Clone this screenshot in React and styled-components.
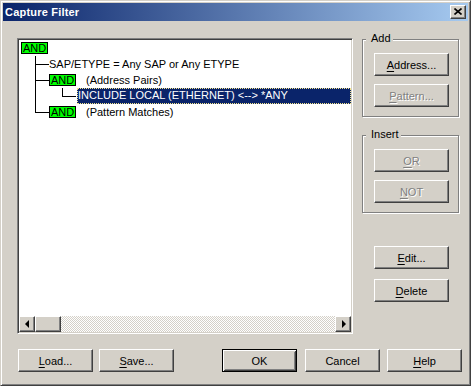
import React from 'react';
import styled, { createGlobalStyle, css } from 'styled-components';

const GlobalStyle = createGlobalStyle`
  html, body {
    margin: 0;
    padding: 0;
    background: #d4d0c8;
  }
  body {
    font-family: 'Liberation Sans', Arial, sans-serif;
    font-size: 11px;
  }
`;

const raised = css`
  border: 1px solid;
  border-color: #fff #404040 #404040 #fff;
  box-shadow: inset -1px -1px #808080, inset 1px 1px #d4d0c8;
`;

const Window = styled.div`
  width: 471px;
  height: 386px;
  box-sizing: border-box;
  background: #d4d0c8;
  border: 1px solid;
  border-color: #d4d0c8 #404040 #404040 #d4d0c8;
  box-shadow: inset 1px 1px #fff, inset -1px -1px #808080;
  padding: 2px;
  display: flex;
  flex-direction: column;
`;

const TitleBar = styled.div`
  height: 18px;
  flex-shrink: 0;
  display: flex;
  align-items: center;
  justify-content: space-between;
  padding: 0 2px;
  background: linear-gradient(to right, #0a246a, #a6caf0);
`;

const Title = styled.span`
  color: #fff;
  font-weight: bold;
  font-size: 11px;
  letter-spacing: 0.2px;
`;

const CloseButton = styled.div`
  ${raised};
  width: 16px;
  height: 14px;
  box-sizing: border-box;
  background: #d4d0c8;
  display: flex;
  align-items: center;
  justify-content: center;
  padding-bottom: 1px;
`;

const Body = styled.div`
  flex: 1;
  display: flex;
  flex-direction: column;
  padding: 17px 0 0 14px;
`;

const Main = styled.div`
  display: flex;
  align-items: flex-start;
`;

const TreePanel = styled.div`
  width: 336px;
  height: 296px;
  box-sizing: border-box;
  border: 1px solid;
  border-color: #808080 #fff #fff #808080;
  box-shadow: inset 1px 1px #404040, inset -1px -1px #d4d0c8;
  padding: 1px;
  background: #fff;
  display: flex;
  flex-direction: column;
`;

const TreeArea = styled.div`
  flex: 1;
  overflow: hidden;
  color: #000;
`;

const Row = styled.div`
  height: 16px;
  display: flex;
  align-items: center;
  padding-left: ${(p) => p.$pad || 0}px;
  white-space: nowrap;
`;

const NodeList = styled.ul`
  list-style: none;
  margin: 0 0 0 ${(p) => p.$indent}px;
  padding: 0;
`;

const NodeItem = styled.li`
  position: relative;
  padding-left: 14px;

  &::before {
    content: '';
    position: absolute;
    left: 0;
    top: 0;
    height: ${(p) => (p.$last ? '8px' : '100%')};
    border-left: 1px solid #000;
  }

  &::after {
    content: '';
    position: absolute;
    left: 0;
    top: 8px;
    width: 14px;
    border-top: 1px solid #000;
  }
`;

const AndTag = styled.span`
  width: 27px;
  height: 12px;
  box-sizing: border-box;
  background: #00ff00;
  border: 1px solid #000;
  display: flex;
  align-items: center;
  justify-content: center;
  line-height: 10px;
  font-size: 11px;
`;

const Label = styled.span`
  margin-left: ${(p) => p.$gap || 0}px;
  line-height: 16px;
  ${(p) =>
    p.$selected &&
    css`
      flex: 1;
      height: 16px;
      box-sizing: border-box;
      margin-left: 1px;
      padding-left: 1px;
      background: #0a246a;
      color: #fff;
      outline: 1px dotted #f5e68c;
      outline-offset: -1px;
      line-height: 15px;
    `}
`;

const HScroll = styled.div`
  height: 16px;
  flex-shrink: 0;
  display: flex;
  background: repeating-conic-gradient(#d4d0c8 0 25%, #fff 0 50%) 0 0 / 2px 2px;
`;

const ScrollButton = styled.div`
  ${raised};
  width: 16px;
  height: 16px;
  box-sizing: border-box;
  background: #d4d0c8;
  display: flex;
  align-items: center;
  justify-content: center;
  ${(p) => p.$end && 'margin-left: auto;'}
`;

const Arrow = styled.span`
  width: 0;
  height: 0;
  border-top: 4px solid transparent;
  border-bottom: 4px solid transparent;
  ${(p) =>
    p.$dir === 'left'
      ? 'border-right: 4px solid #000; margin-right: 1px;'
      : 'border-left: 4px solid #000; margin-left: 1px;'}
`;

const Thumb = styled.div`
  ${raised};
  width: 26px;
  height: 16px;
  box-sizing: border-box;
  background: #d4d0c8;
`;

const SideColumn = styled.div`
  margin-left: 9px;
  padding-top: 1px;
  width: 98px;
  display: flex;
  flex-direction: column;
`;

const GroupBox = styled.div`
  position: relative;
  width: 97px;
  height: 78px;
  box-sizing: border-box;
  border: 1px solid #808080;
  box-shadow: inset 1px 1px #fff, 1px 1px #fff;
  padding: 13px 0 0 11px;
  display: flex;
  flex-direction: column;
  gap: 8px;

  & + & {
    margin-top: 18px;
  }
`;

const Caption = styled.span`
  position: absolute;
  top: -8px;
  left: 3px;
  padding: 0 2px 0 5px;
  background: #d4d0c8;
  line-height: 13px;
  color: #000;
`;

const Button = styled.div`
  ${raised};
  width: 75px;
  height: 23px;
  box-sizing: border-box;
  flex-shrink: 0;
  background: #d4d0c8;
  display: flex;
  align-items: center;
  justify-content: center;
  color: ${(p) => (p.$disabled ? '#808080' : '#000')};
  text-shadow: ${(p) => (p.$disabled ? '1px 1px #fff' : 'none')};
  margin-left: ${(p) => p.$ml || 0}px;
  margin-top: ${(p) => p.$mt || 0}px;

  u {
    text-decoration-thickness: 1px;
    text-underline-offset: 2px;
  }

  ${(p) =>
    p.$default &&
    css`
      border: 1px solid #000;
      box-shadow: inset 1px 1px #fff, inset -1px -1px #404040,
        inset 2px 2px #d4d0c8, inset -2px -2px #808080;
    `}
`;

const ButtonRow = styled.div`
  display: flex;
  margin-top: 15px;
  padding-left: 1px;
`;

const App = () => {
  return (
    <>
      <GlobalStyle />
      <Window>
        <TitleBar>
          <Title>Capture Filter</Title>
          <CloseButton>
            <svg width="8" height="7" viewBox="0 0 8 7">
              <path d="M0.5 0.5 L7.5 6.5 M7.5 0.5 L0.5 6.5" stroke="#000" strokeWidth="1.6" />
            </svg>
          </CloseButton>
        </TitleBar>
        <Body>
          <Main>
            <TreePanel>
              <TreeArea>
                <Row $pad={2}>
                  <AndTag>AND</AndTag>
                </Row>
                <NodeList $indent={16}>
                  <NodeItem>
                    <Row>
                      <Label>SAP/ETYPE = Any SAP or Any ETYPE</Label>
                    </Row>
                  </NodeItem>
                  <NodeItem>
                    <Row>
                      <AndTag>AND</AndTag>
                      <Label $gap={10}>(Address Pairs)</Label>
                    </Row>
                    <NodeList $indent={13}>
                      <NodeItem $last>
                        <Row>
                          <Label $selected>INCLUDE LOCAL (ETHERNET) &lt;--&gt; *ANY</Label>
                        </Row>
                      </NodeItem>
                    </NodeList>
                  </NodeItem>
                  <NodeItem $last>
                    <Row>
                      <AndTag>AND</AndTag>
                      <Label $gap={10}>(Pattern Matches)</Label>
                    </Row>
                  </NodeItem>
                </NodeList>
              </TreeArea>
              <HScroll>
                <ScrollButton>
                  <Arrow $dir="left" />
                </ScrollButton>
                <Thumb />
                <ScrollButton $end>
                  <Arrow $dir="right" />
                </ScrollButton>
              </HScroll>
            </TreePanel>
            <SideColumn>
              <GroupBox>
                <Caption>Add</Caption>
                <Button>
                  <span><u>A</u>ddress...</span>
                </Button>
                <Button $disabled>
                  <span><u>P</u>attern...</span>
                </Button>
              </GroupBox>
              <GroupBox>
                <Caption>Insert</Caption>
                <Button $disabled>
                  <span><u>O</u>R</span>
                </Button>
                <Button $disabled>
                  <span><u>N</u>OT</span>
                </Button>
              </GroupBox>
              <Button $ml={12} $mt={33}>
                <span><u>E</u>dit...</span>
              </Button>
              <Button $ml={12} $mt={10}>
                <span><u>D</u>elete</span>
              </Button>
            </SideColumn>
          </Main>
          <ButtonRow>
            <Button>
              <span><u>L</u>oad...</span>
            </Button>
            <Button $ml={6}>
              <span><u>S</u>ave...</span>
            </Button>
            <Button $ml={48} $default>
              OK
            </Button>
            <Button $ml={8}>Cancel</Button>
            <Button $ml={7}>
              <span><u>H</u>elp</span>
            </Button>
          </ButtonRow>
        </Body>
      </Window>
    </>
  );
};

export default App;
